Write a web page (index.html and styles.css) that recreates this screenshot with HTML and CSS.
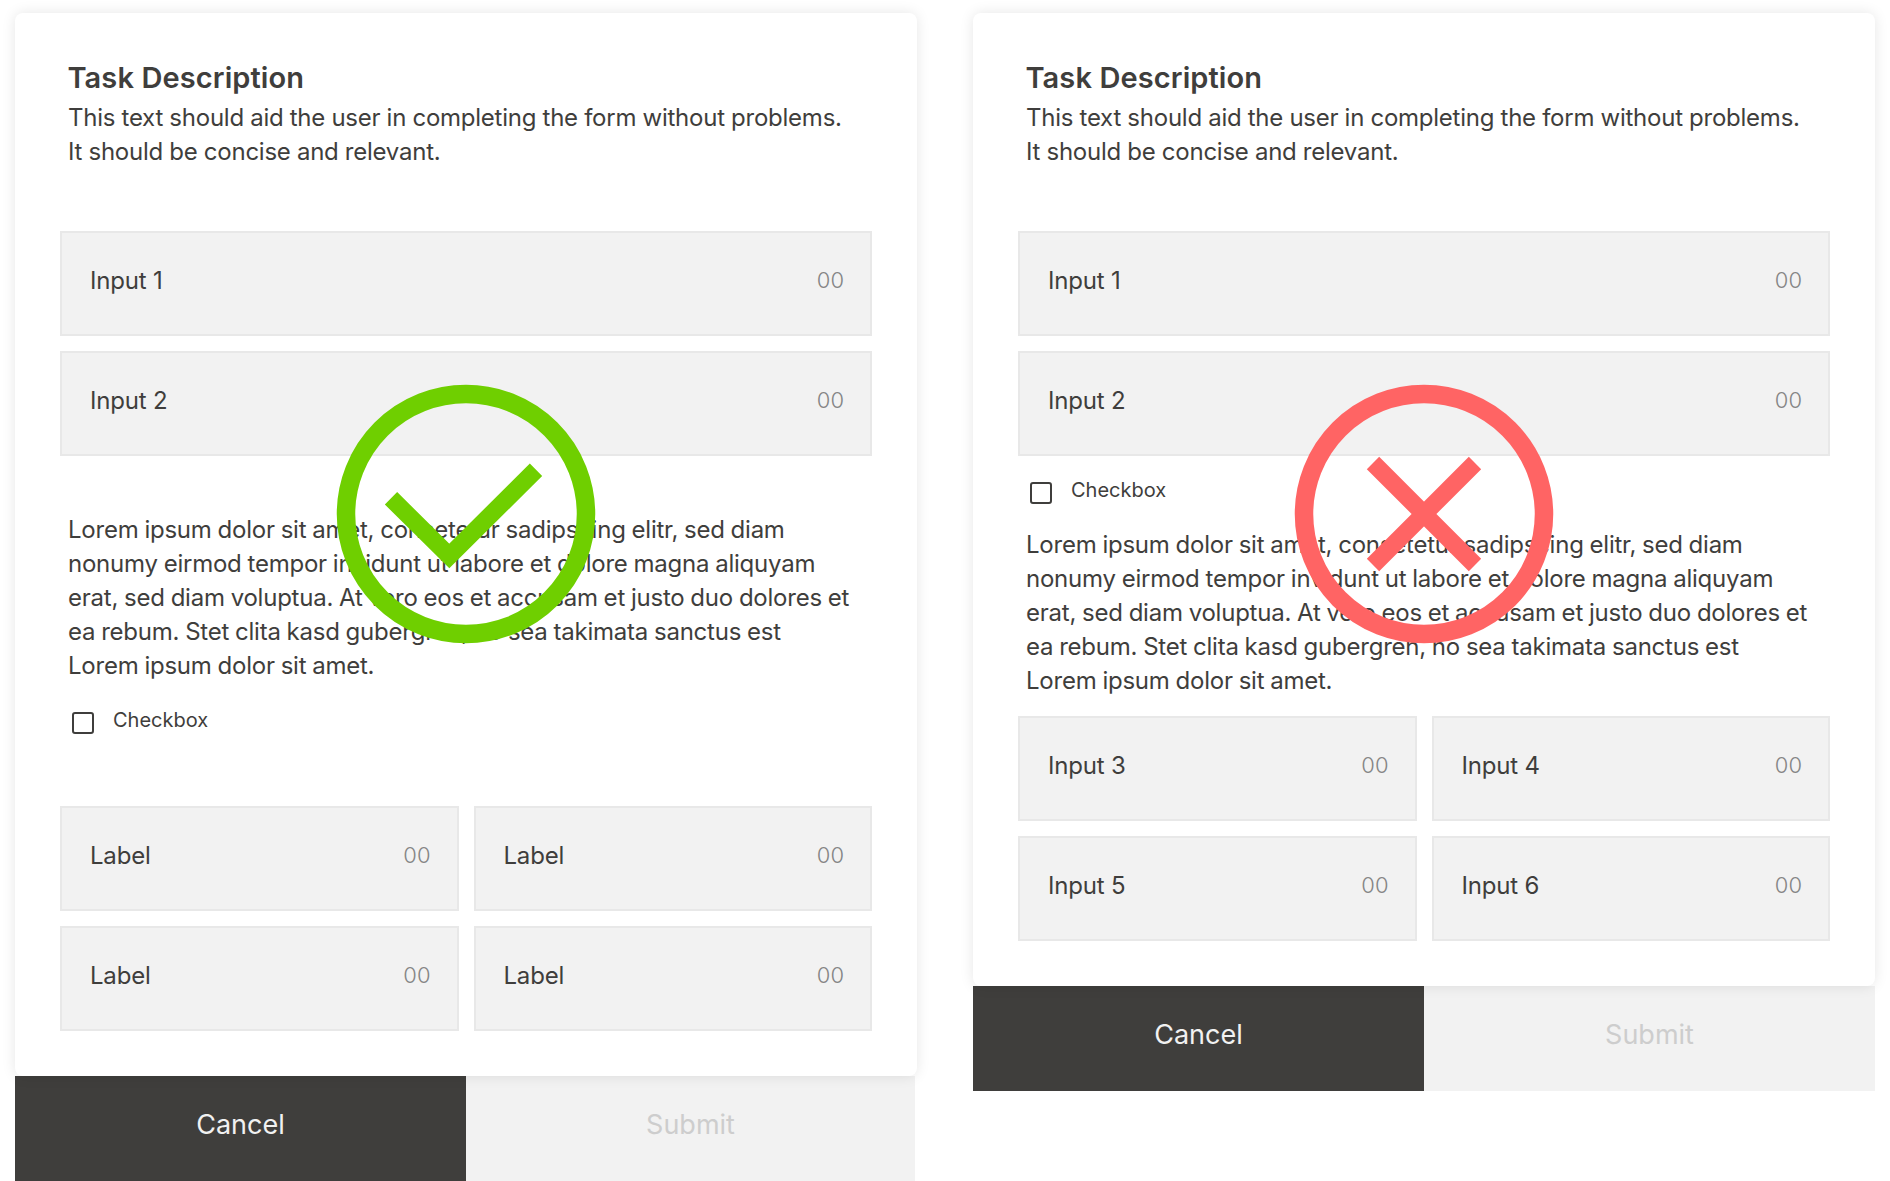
FILE: index.html
```html
<!DOCTYPE html>
<html lang="en">
<head>
<meta charset="utf-8">
<title>Form layout comparison</title>
<link rel="stylesheet" href="styles.css">
</head>
<body>
<main class="page">
  <section class="column">
    <div class="card">
      <h2 class="title">Task Description</h2>
      <p class="desc">This text should aid the user in completing the form without problems.<br>It should be concise and relevant.</p>
      <div class="stack">
        <div class="field"><span>Input 1</span><span class="val">00</span></div>
        <div class="field"><span>Input 2</span><span class="val">00</span></div>
      </div>
      <p class="lorem lorem-good">Lorem ipsum dolor sit amet, consetetur sadipscing elitr, sed diam<br>nonumy eirmod tempor invidunt ut labore et dolore magna aliquyam<br>erat, sed diam voluptua. At vero eos et accusam et justo duo dolores et<br>ea rebum. Stet clita kasd gubergren, no sea takimata sanctus est<br>Lorem ipsum dolor sit amet.</p>
      <label class="check check-good"><span class="box"></span><span>Checkbox</span></label>
      <div class="grid grid-good">
        <div class="field"><span>Label</span><span class="val">00</span></div>
        <div class="field"><span>Label</span><span class="val">00</span></div>
        <div class="field"><span>Label</span><span class="val">00</span></div>
        <div class="field"><span>Label</span><span class="val">00</span></div>
      </div>
    </div>
    <div class="actions actions-good">
      <div class="btn cancel">Cancel</div>
      <div class="btn submit">Submit</div>
    </div>
    <svg class="mark" viewBox="0 0 258 258" aria-hidden="true">
      <circle class="ring-good" cx="129" cy="129" r="120"/>
      <polyline class="glyph-good" points="54,113.3 112.3,171 199,84.7"/>
    </svg>
  </section>

  <section class="column">
    <div class="card">
      <h2 class="title">Task Description</h2>
      <p class="desc">This text should aid the user in completing the form without problems.<br>It should be concise and relevant.</p>
      <div class="stack">
        <div class="field"><span>Input 1</span><span class="val">00</span></div>
        <div class="field"><span>Input 2</span><span class="val">00</span></div>
      </div>
      <label class="check check-bad"><span class="box"></span><span>Checkbox</span></label>
      <p class="lorem lorem-bad">Lorem ipsum dolor sit amet, consetetur sadipscing elitr, sed diam<br>nonumy eirmod tempor invidunt ut labore et dolore magna aliquyam<br>erat, sed diam voluptua. At vero eos et accusam et justo duo dolores et<br>ea rebum. Stet clita kasd gubergren, no sea takimata sanctus est<br>Lorem ipsum dolor sit amet.</p>
      <div class="grid grid-bad">
        <div class="field"><span>Input 3</span><span class="val">00</span></div>
        <div class="field"><span>Input 4</span><span class="val">00</span></div>
        <div class="field"><span>Input 5</span><span class="val">00</span></div>
        <div class="field"><span>Input 6</span><span class="val">00</span></div>
      </div>
    </div>
    <div class="actions">
      <div class="btn cancel">Cancel</div>
      <div class="btn submit">Submit</div>
    </div>
    <svg class="mark" viewBox="0 0 258 258" aria-hidden="true">
      <circle class="ring-bad" cx="129" cy="129" r="120"/>
      <path class="glyph-bad" d="M78 78L180 180M180 78L78 180"/>
    </svg>
  </section>
</main>
</body>
</html>
```

FILE: styles.css
```css
* { box-sizing: border-box; }
html, body { margin: 0; height: 100%; background: #fff; }
body {
  height: 1181px;
  overflow: hidden;
  font-family: Inter, "Liberation Sans", sans-serif;
  color: #3f3e3c;
}
.page {
  display: flex;
  gap: 56px;
  padding: 13px 15px 0;
}
.column {
  position: relative;
  width: 902px;
  flex: none;
}
.card {
  background: #fff;
  border-radius: 8px;
  padding: 48px 45px 45px;
  box-shadow: 0 0 14px rgba(0, 0, 0, 0.1);
  position: relative;
}
.title {
  margin: 0 0 0 7.5px;
  font-size: 29px;
  line-height: 34px;
  font-weight: 600;
  letter-spacing: 0.1px;
}
.desc {
  margin: 6px 0 62px 8px;
  font-size: 24px;
  line-height: 34px;
  font-weight: 400;
  letter-spacing: -0.24px;
  word-spacing: -0.2px;
  white-space: nowrap;
}
.stack { display: grid; gap: 15px; }
.grid {
  display: grid;
  grid-template-columns: 1fr 1fr;
  gap: 15px;
}
.field {
  height: 105px;
  display: flex;
  justify-content: space-between;
  padding: 31px 26px 0 28px;
  background: #f2f2f2;
  border: 2px solid #e8e8e8;
  font-size: 24px;
  line-height: 34px;
  letter-spacing: -0.2px;
}
.val { color: #858585; font-weight: 300; font-size: 22px; line-height: 32px; letter-spacing: 0; }
.lorem {
  margin: 0 0 0 8px;
  font-size: 24px;
  line-height: 34px;
  letter-spacing: -0.23px;
  word-spacing: -0.6px;
  white-space: nowrap;
}
.lorem-good { margin-top: 57px; }
.lorem-bad { margin-top: 24px; }
.check {
  display: flex;
  gap: 19px;
  margin-left: 12px;
  font-size: 20px;
  line-height: 26px;
}
.check-good { margin-top: 24px; }
.check-bad { margin-top: 21px; }
.box {
  width: 22px;
  height: 22px;
  margin-top: 5px;
  border: 2px solid #3f3e3c;
  border-radius: 3px;
}
.grid-good { margin-top: 72px; }
.grid-bad { margin-top: 18px; }
.actions {
  display: flex;
  height: 105px;
}
.actions-good { width: 900px; }
.btn {
  display: flex;
  align-items: center;
  justify-content: center;
  padding-bottom: 9px;
  font-size: 27px;
}
.cancel { width: 451px; background: #3f3e3c; color: #f1f1f1; }
.submit { flex: 1; background: #f2f2f2; color: #cdcdcd; }
.mark {
  position: absolute;
  top: 372px;
  left: 322px;
  width: 258px;
  height: 258px;
  fill: none;
  overflow: visible;
}
.ring-good { stroke: #6fcf00; stroke-width: 18.5; }
.glyph-good { stroke: #6fcf00; stroke-width: 17.5; }
.ring-bad { stroke: #ff6464; stroke-width: 18.5; }
.glyph-bad { stroke: #ff6464; stroke-width: 17.5; }
```
